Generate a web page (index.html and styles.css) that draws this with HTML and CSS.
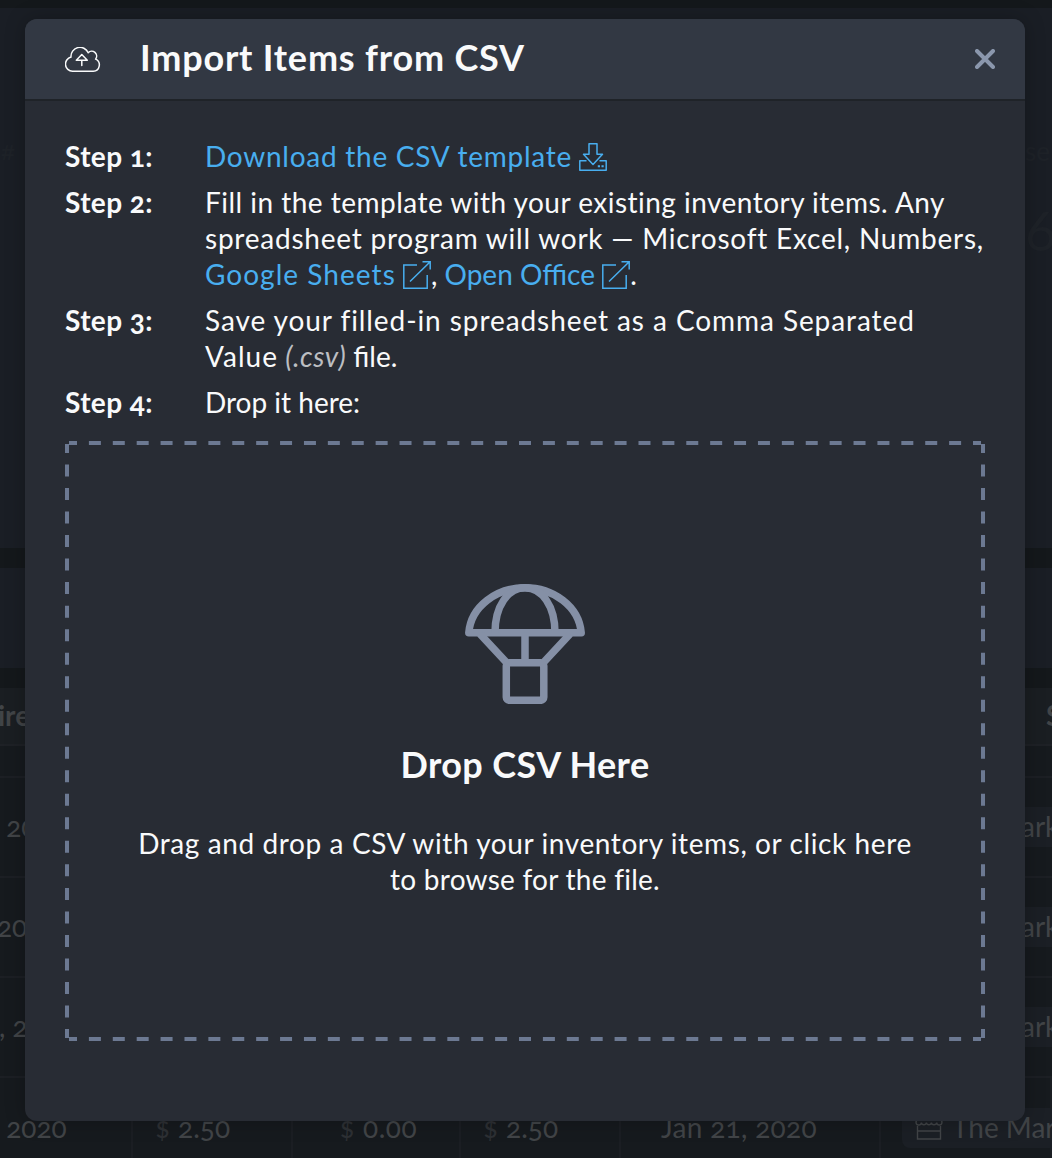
FILE: index.html
```html
<!DOCTYPE html>
<html lang="en">
<head>
    <meta charset="UTF-8">
    <meta name="viewport" content="width=device-width, initial-scale=1.0">
    <title>Import Items from CSV</title>
    <link rel="stylesheet" href="styles.css">
</head>
<body>

    <!-- inventory page behind the modal -->
    <div class="page">
        <div class="panel stats">
            <span class="stat-label">#</span>
            <div class="stat">
                <span class="stat-label">se</span>
                <span class="stat-value">6</span>
            </div>
        </div>
        <div class="panel toolbar"></div>
        <div class="table">
            <div class="table-head"><span>ire</span><span>S</span></div>
            <div class="spacer"></div>
            <div class="row">
                <div class="cell first">&nbsp;20</div>
                <div class="cell store"><span class="tag">ark</span></div>
            </div>
            <div class="row">
                <div class="cell first second">20</div>
                <div class="cell store"><span class="tag">ark</span></div>
            </div>
            <div class="row">
                <div class="cell first">, 2</div>
                <div class="cell store"><span class="tag">ark</span></div>
            </div>
            <div class="row last">
                <div class="cell first">&nbsp;2020</div>
                <div class="cell money"><i>$</i> 2.50</div>
                <div class="cell money"><i>$</i> 0.00</div>
                <div class="cell money"><i>$</i> 2.50</div>
                <div class="cell date">Jan 21, 2020</div>
                <div class="cell store">
                    <span class="tag full">
                        <svg width="28" height="28" viewBox="0 0 28 28" fill="none" stroke="currentColor" stroke-width="1.4">
                            <path d="M4 2h20l3 7c0 4-5 4-5.300 .5c-.5 3-5 3-5.300 0c-.5 3-4.500 3-5 0c-.5 3-4.500 3-5 0c-.5 3.500-5.400 3.500-5.400-.5z"/>
                            <path d="M2.500 13v13h23V13M2.500 18h23"/>
                        </svg>
                        The Mark
                    </span>
                </div>
            </div>
        </div>
    </div>

    <div class="modal">
        <div class="modal-header">
            <svg class="cloud" width="36" height="26" viewBox="0 0 36 26" fill="none" stroke="currentColor" stroke-width="1.5" stroke-linejoin="round" stroke-linecap="round">
                <path d="M7.500 24.300h20.800a6.400 6.400 0 0 0 2.300-12.200A4.900 4.900 0 0 0 23.200 5.700A9 9 0 0 0 6 10.100A7.200 7.200 0 0 0 7.500 24.300z"/>
                <path d="M16.800 18.500v-5.300M11.300 13.200h11l-5.500-5.700z"/>
            </svg>
            <h2>Import Items from CSV</h2>
            <svg class="close" width="20" height="20" viewBox="0 0 20 20" stroke="currentColor" stroke-width="4" stroke-linecap="round">
                <path d="M2 2l16 16M18 2L2 18"/>
            </svg>
        </div>

        <div class="modal-body">
            <div class="step">
                <strong>Step 1:</strong>
                <p>
                    <a href="#"><span class="ls-download">Download the CSV template</span>
                    <svg class="icon" width="28" height="28" viewBox="0 0 28 28" fill="none" stroke="currentColor" stroke-width="1.5" stroke-linejoin="round">
                        <path d="M10 .8h8v10.500h5.500L14 21.500L4.500 11.300H10z"/>
                        <path d="M7.500 17.800H.8v9.400h26.400v-9.400h-6.700"/>
                        <path d="M18.800 23.200h2.200M22.500 23.200h2.200" stroke-width="2"/>
                    </svg></a>
                </p>
            </div>
            <div class="step">
                <strong>Step 2:</strong>
                <p>
                    <span class="ls-fill">Fill in the template with your existing inventory items. Any</span><br>
                    <span class="ls-program">spreadsheet program will work — Microsoft Excel, Numbers,</span><br>
                    <a href="#"><span class="ls-sheets">Google Sheets</span>
                    <svg class="icon" width="28" height="28" viewBox="0 0 28 28" fill="none" stroke="currentColor" stroke-width="1.5">
                        <path d="M14 4H.8v23.200h23.400V14M19.500 .8h7.700v7.700M27.200 .8L7 20.500"/>
                    </svg></a>, <a href="#">Open Office
                    <svg class="icon" width="28" height="28" viewBox="0 0 28 28" fill="none" stroke="currentColor" stroke-width="1.5">
                        <path d="M14 4H.8v23.200h23.400V14M19.500 .8h7.700v7.700M27.200 .8L7 20.500"/>
                    </svg></a>.
                </p>
            </div>
            <div class="step">
                <strong>Step 3:</strong>
                <p>
                    <span class="ls-save">Save your filled-in spreadsheet as a Comma Separated</span><br>
                    <span class="ls-sheets">Value</span> <em>(.csv)</em> file.
                </p>
            </div>
            <div class="step">
                <strong>Step 4:</strong>
                <p>Drop it here:</p>
            </div>

            <div class="dropzone">
                <svg class="dashes" width="920" height="600" fill="none" stroke="currentColor" stroke-width="4">
                    <path d="M4 2H916M4 598H916" stroke-dasharray="12 11.895" stroke-dashoffset="4"/>
                    <path d="M2 3V597M918 3V597" stroke-dasharray="12 11.520" stroke-dashoffset="3"/>
                </svg>
                <svg class="parachute" width="120" height="120" viewBox="0 0 120 120" fill="none" stroke="currentColor" stroke-width="7.500" stroke-linejoin="round">
                    <path d="M3.800 48.800C6 22 32 3.800 60 3.800S114 22 116.200 48.800z"/>
                    <path d="M30 48.800C30 22 43 3.800 60 3.800S90 22 90 48.800"/>
                    <path d="M60 48.800v30M15 50l26.500 28.500M105 50L78.500 78.500"/>
                    <rect x="41.300" y="78.800" width="37.500" height="37.500" rx="3"/>
                </svg>
                <h2>Drop CSV Here</h2>
                <p>
                    <span class="ls-drag">Drag and drop a CSV with your inventory items, or click here</span><br>
                    <span class="ls-browse">to browse for the file.</span>
                </p>
            </div>
        </div>
    </div>

</body>
</html>
```
FILE: styles.css
```css
* {
    padding: 0;
    margin: 0;
    box-sizing: border-box;
}

body {
    height: 1158px;
    overflow: hidden;
    background-color: #14181b;
    color: #f9fafb;
    font-family: Lato, sans-serif;
    font-size: 28px;
    line-height: 36px;
    font-variant-numeric: oldstyle-nums;
}

/* page behind */
.page {
    height: 1158px;
    padding-top: 8px;
    overflow: hidden;
    color: #414447;
    white-space: nowrap;
}

.panel {
    background-color: #1a1e25;
    margin-bottom: 20px;
}

.stats {
    height: 540px;
    padding: 124px 0 0 1px;
    display: flex;
    justify-content: space-between;
    color: #1e2228;
}

.stat {
    width: 27px;
}

.stat-label {
    font-size: 26px;
}

.stat-value {
    display: block;
    font-size: 54px;
    line-height: 60px;
    margin-top: 32px;
    font-variant-numeric: lining-nums;
}

.toolbar {
    height: 100px;
}

.table-head {
    height: 58px;
    background-color: #1a1e22;
    border-bottom: 2px solid #1e2126;
    display: flex;
    justify-content: space-between;
    align-items: center;
    font-weight: bold;
    padding-bottom: 2px;
}

.table-head span:first-child {
    margin-left: -2px;
}

.table-head span:last-child {
    width: 6px;
}

.spacer {
    height: 32px;
    background-color: #161a1e;
    border-bottom: 2px solid #1c1f24;
}

.row {
    height: 100px;
    display: flex;
    background-color: #161a1e;
    border-bottom: 2px solid #1c1f24;
}

.row.last {
    height: 80px;
    border-bottom: none;
}

.row.last .cell {
    height: 100px;
    border-right: 2px solid #1b1e23;
}

.cell {
    width: 160px;
    flex-shrink: 0;
    display: flex;
    align-items: center;
    padding-bottom: 3px;
}

.cell.first {
    width: 134px;
    margin-left: -1px;
    padding-right: 1px;
}

.cell.second {
    margin-left: -3px;
    padding-right: 3px;
    width: 136px;
}

.cell.money {
    justify-content: flex-end;
    padding-right: 61px;
}

.cell.money + .cell.money {
    width: 168px;
    padding-right: 42px;
    letter-spacing: 0.5px;
}

.cell.money + .cell.money + .cell.money {
    width: 160px;
    padding-right: 61px;
    letter-spacing: 0;
}

.cell i {
    font-style: normal;
    color: #2d3034;
    margin-right: 8px;
}

.cell.date {
    width: 260px;
    padding-left: 40px;
    letter-spacing: 0.3px;
}

.cell.store {
    flex: 1;
    padding-left: 21px;
    padding-bottom: 0;
}

.row:not(.last) .store {
    padding-left: 769px;
}

.row:not(.last) .tag {
    padding-left: 119px;
}

.tag {
    height: 40px;
    width: 250px;
    flex-shrink: 0;
    padding-left: 13px;
    padding-bottom: 3px;
    border-radius: 8px;
    background-color: #1b1f25;
    display: flex;
    align-items: center;
    gap: 9px;
}

.tag svg {
    flex-shrink: 0;
}

/* modal */
.modal {
    position: absolute;
    left: 25px;
    top: 19px;
    width: 1000px;
    height: 1102px;
    border-radius: 12px;
    overflow: hidden;
    background-color: #282c34;
    box-shadow: 0 0 20px rgba(0, 0, 0, 0.25);
}

.modal-header {
    height: 82px;
    padding: 0 30px 0 40px;
    display: flex;
    align-items: center;
    background-color: #323843;
    border-bottom: 2px solid #1f2328;
}

.cloud {
    margin-top: 2px;
}

.modal-header h2 {
    flex: 1;
    margin-left: 39px;
    padding-bottom: 4px;
    letter-spacing: 0.8px;
}

h2 {
    font-size: 36px;
    line-height: 46px;
    font-weight: 700;
}

.close {
    color: #8b97ad;
}

.modal-body {
    padding: 37px 40px 80px;
}

.step {
    display: flex;
    margin-bottom: 10px;
}

.step strong {
    width: 140px;
    flex-shrink: 0;
    letter-spacing: 0.4px;
}

.step p {
    white-space: nowrap;
}

a {
    color: #48aeef;
    text-decoration: none;
}

em {
    color: #bcbec2;
    letter-spacing: 0.5px;
}

.icon {
    vertical-align: -4px;
}

.dropzone {
    position: relative;
    height: 600px;
    margin-top: 21px;
    padding-top: 143px;
    text-align: center;
    cursor: pointer;
}

.dashes {
    position: absolute;
    left: 0;
    top: 0;
    color: #6c7992;
}

.parachute {
    display: block;
    margin: 0 auto 37px;
    color: #8590a6;
}

.dropzone h2 {
    letter-spacing: 0.4px;
    margin-bottom: 38px;
}

/* tracking */
.ls-download {
    letter-spacing: 0.74px;
}

.ls-fill {
    letter-spacing: 0.48px;
}

.ls-program {
    letter-spacing: 0.77px;
}

.ls-sheets {
    letter-spacing: 1.04px;
}

.ls-save {
    letter-spacing: 0.92px;
}

.ls-drag {
    letter-spacing: 0.6px;
}

.ls-browse {
    letter-spacing: 0.25px;
}
```
